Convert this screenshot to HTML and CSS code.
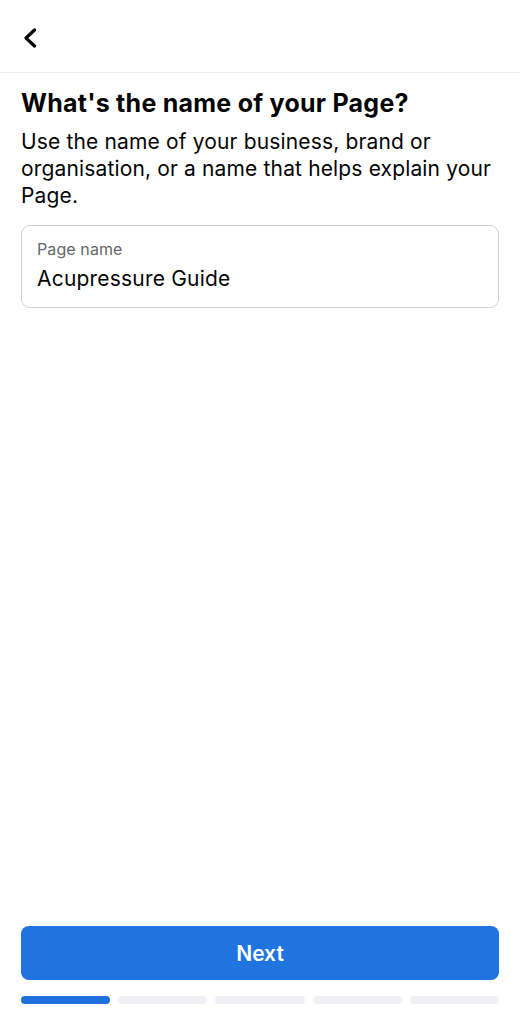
FILE: index.html
```html
<!DOCTYPE html>
<html lang="en">
<head>
<meta charset="utf-8">
<title>Page name</title>
<link rel="stylesheet" href="styles.css">
</head>
<body>
<div class="screen">
  <header class="topbar">
    <button class="back" aria-label="Back">
      <svg width="14" height="20" viewBox="0 0 14 20"><path d="M11.5 2 L3 10 L11.5 18" fill="none" stroke="#050505" stroke-width="3.2" stroke-linecap="round" stroke-linejoin="round"/></svg>
    </button>
  </header>
  <main class="content">
    <h1 class="title">What's the name of your Page?</h1>
    <p class="desc">Use the name of your business, brand or organisation, or a name that helps explain your Page.</p>
    <div class="field">
      <div class="field-label">Page name</div>
      <div class="field-value">Acupressure Guide</div>
    </div>
  </main>
  <footer class="footer">
    <button class="next">Next</button>
    <div class="progress">
      <span class="seg active"></span>
      <span class="seg"></span>
      <span class="seg"></span>
      <span class="seg"></span>
      <span class="seg"></span>
    </div>
  </footer>
</div>
</body>
</html>
```

FILE: styles.css
```css
* { box-sizing: border-box; }
html, body { margin: 0; padding: 0; background: #fff; }
body {
  font-family: Inter, "Noto Sans", "Liberation Sans", sans-serif;
  color: #050505;
}
.screen {
  height: 1024px;
  display: flex;
  flex-direction: column;
}
.topbar {
  height: 73px;
  border-bottom: 1px solid #eceef0;
  display: flex;
  align-items: flex-start;
  padding: 28px 0 0 23px;
}
.back {
  border: 0;
  background: none;
  padding: 0;
  margin: 0;
  width: 16px;
  height: 20px;
  display: block;
}
.back svg { display: block; }
.content {
  flex: 1;
  padding: 15px 21px 0 21px;
}
.title {
  margin: 0;
  font-size: 25px;
  line-height: 30px;
  font-weight: 700;
  letter-spacing: 0.25px;
}
.desc {
  margin: 10px 0 0 0;
  font-size: 21px;
  line-height: 27px;
  font-weight: 400;
  letter-spacing: 0.15px;
}
.field {
  margin-top: 16px;
  height: 83px;
  border: 1px solid #ccd0d5;
  border-radius: 9px;
  padding: 13px 15px 0 15px;
}
.field-label {
  font-size: 16px;
  line-height: 20px;
  color: #65676b;
  letter-spacing: 0.1px;
}
.field-value {
  margin-top: 7px;
  font-size: 21px;
  line-height: 26px;
  letter-spacing: 0.2px;
}
.footer {
  padding: 0 21px 20px 21px;
}
.next {
  display: block;
  width: 100%;
  height: 54px;
  border: 0;
  border-radius: 8px;
  background: #1f74e2;
  color: #fff;
  font-family: inherit;
  font-size: 21px;
  font-weight: 600;
  padding: 0;
}
.progress {
  margin-top: 16px;
  display: flex;
  gap: 8px;
}
.seg {
  flex: 1;
  height: 8px;
  border-radius: 4px;
  background: #eff1f4;
}
.seg.active { background: #1f6fdc; }
```
